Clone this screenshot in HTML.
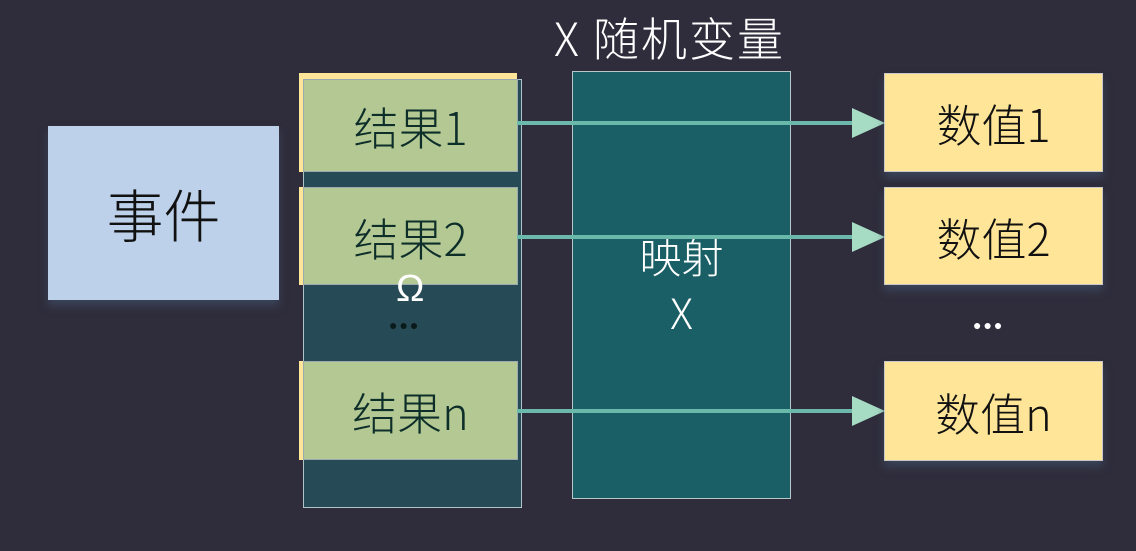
<!DOCTYPE html>
<html><head><meta charset="utf-8"><style>
body{margin:0;width:1136px;height:551px;background:#2f2d3b;position:relative;overflow:hidden;font-family:"Noto Sans CJK SC","Liberation Sans",sans-serif;font-weight:300}
.a{position:absolute;box-sizing:border-box}
.c{display:flex;align-items:center;justify-content:center}
.y{background:#fee598;border:1px solid #c8c8c8;color:#111;font-size:45px;box-shadow:0 6px 8px rgba(70,90,120,.5)}
.g{background:#b3c893;border:1px solid #9aaab0;color:#0e2e2a;font-size:45px}
.t{color:#fff}
</style></head><body>
<div class="a c" style="left:48px;top:126px;width:231px;height:174px;background:#bdd1ea;font-size:57px;color:#111;box-shadow:0 6px 8px rgba(70,90,120,.5)">事件</div>
<div class="a" style="left:303px;top:79px;width:219px;height:429px;background:#264a56;border:1px solid #b0c4c8"></div>
<div class="a" style="left:299px;top:73px;width:218px;height:99px;background:#fee598"></div>
<div class="a" style="left:299px;top:187px;width:10px;height:98px;background:#fee598"></div>
<div class="a" style="left:299px;top:361px;width:10px;height:99px;background:#fee598"></div>
<div class="a c g" style="left:303px;top:79px;width:215px;height:93px">结果1</div>
<div class="a c g" style="left:303px;top:187px;width:215px;height:98px">结果2</div>
<div class="a c g" style="left:303px;top:361px;width:215px;height:99px">结果n</div>
<div class="a t" style="left:396px;top:268px;font-size:38px;color:#fff;font-family:'Liberation Sans',sans-serif">Ω</div>
<div class="a" style="left:389px;top:317px;font-size:14px;letter-spacing:2px;color:#0a1a1a;font-family:'Liberation Sans',sans-serif">●●●</div>
<div class="a" style="left:572px;top:71px;width:219px;height:428px;background:#1a5f66;border:1px solid #b8c8c8"></div>
<div class="a t" style="left:554px;top:4px;font-size:46px;letter-spacing:2px">X 随机变量</div>
<div class="a t" style="left:572px;width:219px;top:228px;text-align:center;font-size:42px;line-height:56px">映射<br>X</div>
<svg class="a" style="left:0;top:0" width="1136" height="551">
<g fill="#a7dcc4">
<rect x="517" y="121" width="340" height="4" fill="#6bb9aa"/><polygon points="852,108 885,123 852,138"/>
<rect x="517" y="235" width="340" height="4" fill="#6bb9aa"/><polygon points="852,222 885,237 852,252"/>
<rect x="517" y="409" width="340" height="4" fill="#6bb9aa"/><polygon points="852,396 885,411 852,426"/>
</g></svg>
<div class="a c y" style="left:884px;top:73px;width:219px;height:99px">数值1</div>
<div class="a c y" style="left:884px;top:187px;width:219px;height:98px">数值2</div>
<div class="a c y" style="left:884px;top:361px;width:219px;height:100px">数值n</div>
<div class="a t" style="left:973px;top:317px;font-size:14px;letter-spacing:2px;font-family:'Liberation Sans',sans-serif">●●●</div>
</body></html>
